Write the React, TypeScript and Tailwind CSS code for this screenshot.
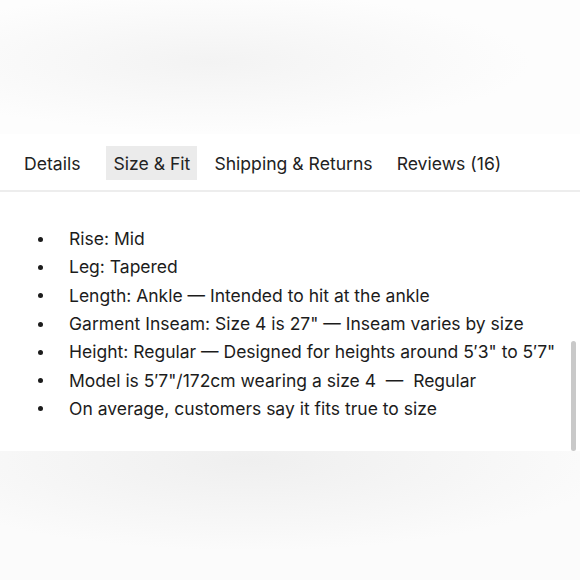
const TABS = ['Details', 'Size & Fit', 'Shipping & Returns', 'Reviews (16)']

const FIT = [
  'Rise: Mid',
  'Leg: Tapered',
  'Length: Ankle — Intended to hit at the ankle',
  'Garment Inseam: Size 4 is 27" — Inseam varies by size',
  'Height: Regular — Designed for heights around 5′3" to 5′7"',
  'Model is 5′7"/172cm wearing a size 4  —  Regular',
  'On average, customers say it fits true to size',
]

export default function App() {
  return (
    <div
      className="flex h-[580px] w-[580px] flex-col overflow-hidden bg-white text-[#1c1c1c]"
      style={{ fontFamily: 'Inter, "Noto Sans", sans-serif' }}
    >
      {/* blurred area above the panel */}
      <div className="h-[134px] shrink-0 bg-[radial-gradient(ellipse_320px_70px_at_210px_62px,#f3f3f3,#fafafa_70%,#fdfdfd)]" />

      <section className="relative h-[317px] shrink-0 bg-white">
        <nav className="flex h-[58px] items-center gap-[10px] border-b-2 border-[#ededed] pl-[17px] pt-[2px]">
          {TABS.map((t, i) => (
            <button
              key={t}
              className={`flex h-[34px] items-center px-[7px] pt-[3px] text-[17.6px] text-[#222] ${
                i === 0 ? 'mr-[9px]' : ''
              } ${i === 1 ? 'bg-[#ebebeb]' : ''}`}
            >
              {t}
            </button>
          ))}
        </nav>

        <ul className="pt-[33px]">
          {FIT.map((line) => (
            <li key={line} className="flex h-[28.3px] items-center text-[17.5px] whitespace-pre">
              <span className="ml-[38px] mr-[26px] h-[5px] w-[5px] shrink-0 rounded-full bg-[#1c1c1c]" />
              {line}
            </li>
          ))}
        </ul>

        <div className="absolute bottom-0 right-[4px] h-[110px] w-[5px] rounded-full bg-[#c9c9c9]" />
      </section>

      {/* blurred area below the panel */}
      <div className="flex-1 bg-[radial-gradient(ellipse_360px_90px_at_250px_10px,#efefef,#f6f6f6_60%,#fbfbfb)]" />
    </div>
  )
}
